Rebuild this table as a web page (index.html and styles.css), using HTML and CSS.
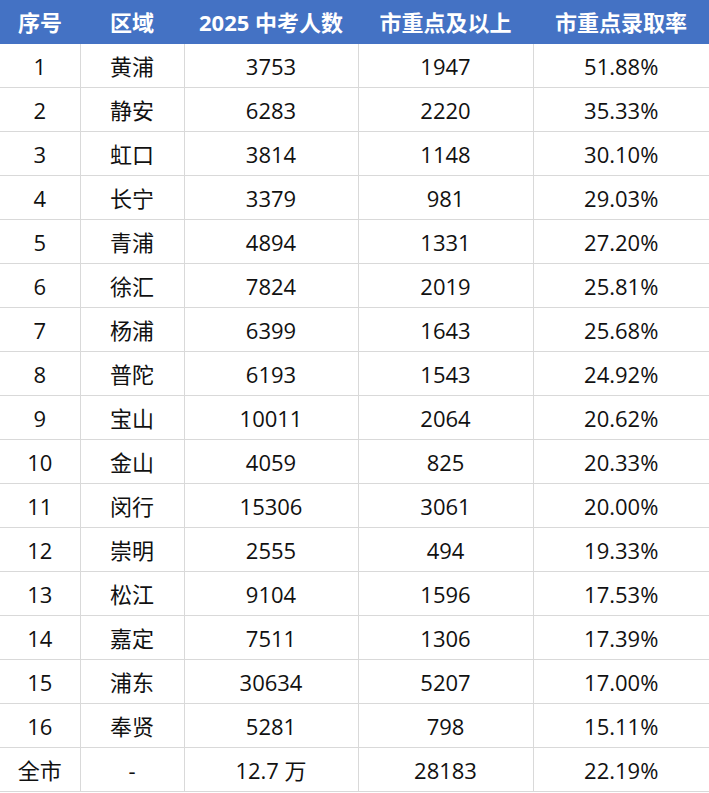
FILE: index.html
```html
<!DOCTYPE html>
<html lang="zh-CN">
<head>
<meta charset="utf-8">
<title>2025 上海中考市重点录取率</title>
<link rel="stylesheet" href="styles.css">
</head>
<body>
<table class="data">
  <colgroup>
    <col class="c1"><col class="c2"><col class="c3"><col class="c4"><col class="c5">
  </colgroup>
  <thead>
    <tr><th>序号</th><th>区域</th><th>2025 中考人数</th><th>市重点及以上</th><th>市重点录取率</th></tr>
  </thead>
  <tbody>
    <tr><td>1</td><td>黄浦</td><td>3753</td><td>1947</td><td>51.88%</td></tr>
    <tr><td>2</td><td>静安</td><td>6283</td><td>2220</td><td>35.33%</td></tr>
    <tr><td>3</td><td>虹口</td><td>3814</td><td>1148</td><td>30.10%</td></tr>
    <tr><td>4</td><td>长宁</td><td>3379</td><td>981</td><td>29.03%</td></tr>
    <tr><td>5</td><td>青浦</td><td>4894</td><td>1331</td><td>27.20%</td></tr>
    <tr><td>6</td><td>徐汇</td><td>7824</td><td>2019</td><td>25.81%</td></tr>
    <tr><td>7</td><td>杨浦</td><td>6399</td><td>1643</td><td>25.68%</td></tr>
    <tr><td>8</td><td>普陀</td><td>6193</td><td>1543</td><td>24.92%</td></tr>
    <tr><td>9</td><td>宝山</td><td>10011</td><td>2064</td><td>20.62%</td></tr>
    <tr><td>10</td><td>金山</td><td>4059</td><td>825</td><td>20.33%</td></tr>
    <tr><td>11</td><td>闵行</td><td>15306</td><td>3061</td><td>20.00%</td></tr>
    <tr><td>12</td><td>崇明</td><td>2555</td><td>494</td><td>19.33%</td></tr>
    <tr><td>13</td><td>松江</td><td>9104</td><td>1596</td><td>17.53%</td></tr>
    <tr><td>14</td><td>嘉定</td><td>7511</td><td>1306</td><td>17.39%</td></tr>
    <tr><td>15</td><td>浦东</td><td>30634</td><td>5207</td><td>17.00%</td></tr>
    <tr><td>16</td><td>奉贤</td><td>5281</td><td>798</td><td>15.11%</td></tr>
    <tr><td>全市</td><td>-</td><td>12.7 万</td><td>28183</td><td>22.19%</td></tr>
  </tbody>
</table>
</body>
</html>
```
FILE: styles.css
```css
html, body {
  margin: 0;
  padding: 0;
  background: #ffffff;
}
body {
  font-family: "Open Sans", "Noto Sans CJK SC", sans-serif;
  color: #111111;
}
.data {
  width: 709px;
  border-collapse: collapse;
  table-layout: fixed;
}
.c1 { width: 80px; }
.c2 { width: 104px; }
.c3 { width: 174px; }
.c4 { width: 175px; }
.c5 { width: 176px; }
.data th {
  background: #4472c4;
  color: #ffffff;
  font-weight: 700;
  font-size: 22px;
  height: 44px;
  padding: 0;
  text-align: center;
  vertical-align: middle;
  line-height: 1;
}
.data td {
  height: 43px;
  padding: 0;
  font-size: 22px;
  text-align: center;
  vertical-align: middle;
  line-height: 1;
  border: 1px solid #d9d9d9;
}
.data tr td:first-child { border-left: none; }
.data tr td:last-child { border-right: none; }
.data tbody tr:first-child td { border-top: none; }
```
